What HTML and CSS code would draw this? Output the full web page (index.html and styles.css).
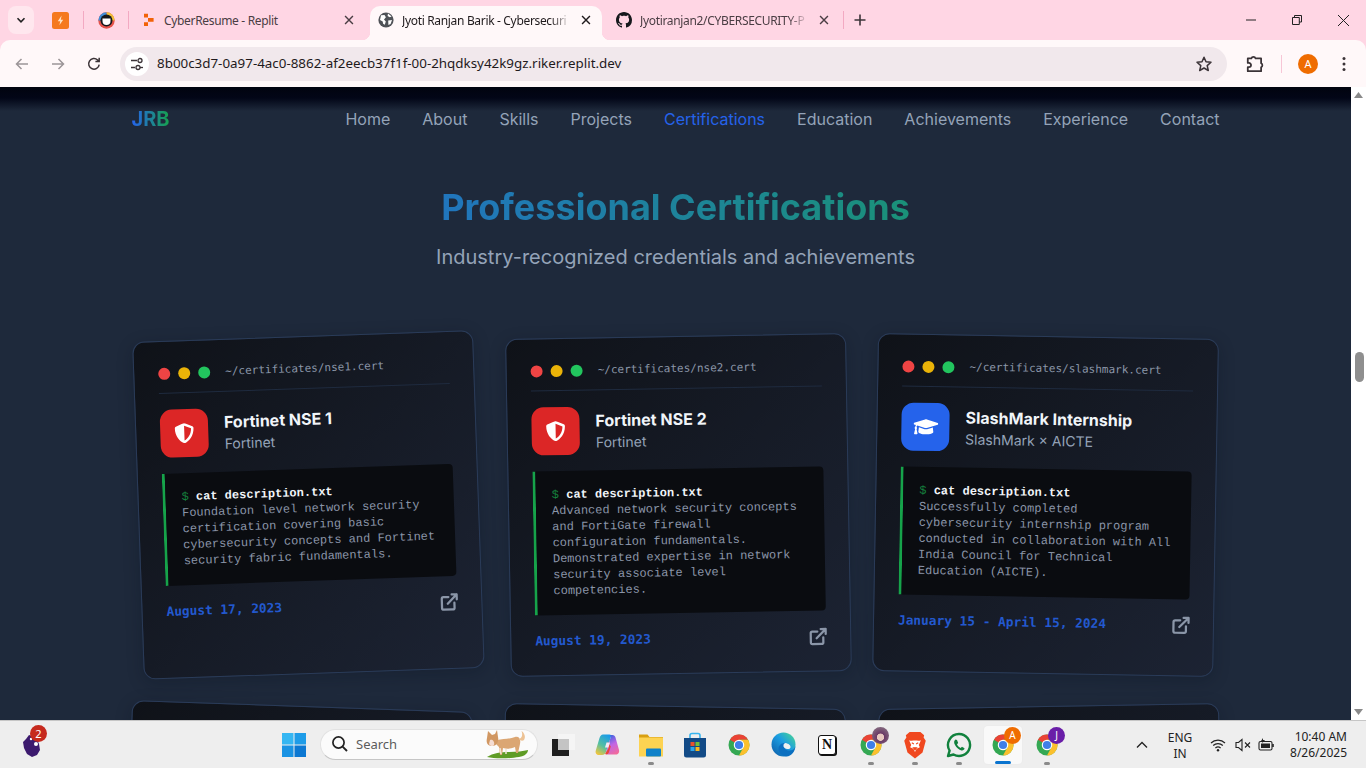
FILE: index.html
```html
<!DOCTYPE html>
<html lang="en">
<head>
<meta charset="utf-8">
<title>Jyoti Ranjan Barik - Cybersecurity</title>
<link rel="stylesheet" href="styles.css">
</head>
<body>
<svg class="defs" aria-hidden="true">
  <symbol id="chrome" viewBox="0 0 48 48">
    <circle cx="24" cy="24" r="21" fill="#34a853"/>
    <path d="M5.8 13.5A21 21 0 0 1 42.2 13.5H24L15.3 19Z" fill="#ea4335"/>
    <path d="M42.2 13.5A21 21 0 0 1 24 45L32.7 29L32.7 19L24 13.5Z" fill="#fbc02d"/>
    <circle cx="24" cy="24" r="10.5" fill="#fff"/>
    <circle cx="24" cy="24" r="8.2" fill="#3f7fe8"/>
  </symbol>
  <symbol id="ext" viewBox="0 0 24 24">
    <path d="M18 13v6a2 2 0 0 1-2 2H5a2 2 0 0 1-2-2V8a2 2 0 0 1 2-2h6M15 3h6v6M10 14 21 3" fill="none" stroke="currentColor" stroke-width="2.7" stroke-linecap="round" stroke-linejoin="round"/>
  </symbol>
  <symbol id="shield" viewBox="0 0 512 512">
    <path fill="currentColor" d="M466.5 83.7l-192-80a48.15 48.15 0 0 0-36.9 0l-192 80C27.7 91.1 16 108.6 16 128c0 198.5 114.5 335.7 221.5 380.3 11.8 4.9 25.1 4.9 36.9 0C360.1 472.6 496 349.3 496 128c0-19.4-11.7-36.9-29.5-44.3zM256.1 446.3l-.1-381 175.9 73.3c-3.3 151.4-82.1 261.1-175.8 307.7z"/>
  </symbol>
  <symbol id="cap" viewBox="0 0 640 512">
    <path fill="currentColor" d="M622.34 153.2L343.4 67.5c-15.2-4.67-31.6-4.67-46.79 0L17.66 153.2c-23.54 7.23-23.54 38.36 0 45.59l48.63 14.94c-10.67 13.19-17.23 29.28-17.88 46.9C38.78 266.15 32 276.11 32 288c0 10.78 5.68 19.85 13.86 25.65L20.33 428.53C18.11 438.52 25.71 448 35.94 448h56.11c10.24 0 17.84-9.48 15.62-19.47L82.14 313.65C90.32 307.85 96 298.78 96 288c0-11.57-6.47-21.25-15.66-26.87.76-15.02 8.44-28.3 20.69-36.72L296.6 284.5c9.06 2.78 26.44 6.25 46.79 0l278.95-85.7c23.55-7.24 23.55-38.36 0-45.6zM352.79 315.09c-28.53 8.76-52.84 3.92-65.59 0l-145.02-44.55L128 384c0 35.35 85.96 64 192 64s192-28.65 192-64l-14.18-113.47-145.03 44.56z"/>
  </symbol>
  <symbol id="close" viewBox="0 0 16 16">
    <path d="M3.5 3.5l9 9M12.5 3.5l-9 9" fill="none" stroke="currentColor" stroke-width="1.6"/>
  </symbol>
</svg>

<header class="tabstrip">
  <button class="switcher"><svg width="10" height="10" viewBox="0 0 10 10"><path d="M1.5 3.2 5 6.8 8.5 3.2" fill="none" stroke="#222" stroke-width="1.6"/></svg></button>
  <div class="pin pin-a">
    <svg width="17" height="17" viewBox="0 0 17 17"><rect width="17" height="17" rx="2.5" fill="#f5791f"/><path d="M9.6 3.6 5.8 9.3h2.4l-.8 4 3.8-5.6H8.8z" fill="#ffe3c4"/></svg>
  </div>
  <i class="sep"></i>
  <div class="pin pin-b">
    <svg width="17" height="17" viewBox="0 0 17 17"><circle cx="8.5" cy="8.5" r="8.2" fill="#e5534b"/><path d="M8.5.3a8.2 8.2 0 0 1 8.2 8.2H8.5z" fill="#f2c037"/><path d="M.3 8.5A8.2 8.2 0 0 1 8.5.3v8.2z" fill="#3f8ed8"/><circle cx="8.5" cy="8.5" r="6" fill="#16181c"/><path d="M4.5 6.5h8v2.6a4 4 0 0 1-8 0z" fill="#fff"/></svg>
  </div>
  <i class="sep"></i>
  <div class="tab">
    <svg class="fav" width="14" height="14" viewBox="0 0 14 14"><path d="M3 .8h4v3.700H3zM7 4.900h5.600v3.900H7zM3 9.200h4v3.900H3z" fill="#f26207"/></svg>
    <span class="tab-title">CyberResume - Replit</span>
    <svg class="tab-x" width="14" height="14"><use href="#close"/></svg>
  </div>
  <div class="tab tab-active">
    <svg class="fav" width="16" height="16" viewBox="0 0 16 16"><circle cx="8" cy="8" r="7.6" fill="#4f5257"/><path d="M3 3.2 6.5 3l1.4 2.2L6 7.4l1.8 2-1 3.4-1.7-1-.4-2.4L2 8zM10 1.6l3.6 3-1.800.7L9.600 4zM10.200 8.500l3.800-.5-1.400 4-2.200 1z" fill="#fff"/></svg>
    <span class="tab-title fade">Jyoti Ranjan Barik - Cybersecuri</span>
    <svg class="tab-x" width="14" height="14"><use href="#close"/></svg>
  </div>
  <div class="tab tab-third">
    <svg class="fav" width="16" height="16" viewBox="0 0 16 16"><path fill="#16181c" d="M8 0C3.58 0 0 3.58 0 8c0 3.54 2.29 6.53 5.47 7.59.4.07.55-.17.55-.38 0-.19-.01-.82-.01-1.49-2.01.37-2.53-.49-2.69-.94-.09-.23-.48-.94-.82-1.13-.28-.15-.68-.52-.01-.53.63-.01 1.08.58 1.23.82.72 1.21 1.87.87 2.33.66.07-.52.28-.87.51-1.07-1.78-.2-3.64-.89-3.64-3.95 0-.87.31-1.59.82-2.15-.08-.2-.36-1.02.08-2.12 0 0 .67-.21 2.2.82.64-.18 1.32-.27 2-.27s1.36.09 2 .27c1.53-1.04 2.2-.82 2.2-.82.44 1.1.16 1.92.08 2.12.51.56.82 1.27.82 2.15 0 3.07-1.87 3.75-3.65 3.95.29.25.54.73.54 1.48 0 1.07-.01 1.93-.01 2.2 0 .21.15.46.55.38A8.01 8.01 0 0 0 16 8c0-4.42-3.58-8-8-8z"/></svg>
    <span class="tab-title fade">Jyotiranjan2/CYBERSECURITY-P</span>
    <svg class="tab-x" width="14" height="14"><use href="#close"/></svg>
  </div>
  <i class="sep"></i>
  <svg class="plus" width="14" height="14" viewBox="0 0 14 14"><path d="M7 1.500v11M1.500 7h11" stroke="#3c3438" stroke-width="1.6"/></svg>
  <div class="winctl">
    <span class="wbtn"><svg width="12" height="12" viewBox="0 0 12 12"><path d="M1 6h10" stroke="#222" stroke-width="1"/></svg></span>
    <span class="wbtn"><svg width="12" height="12" viewBox="0 0 12 12"><path d="M1.500 3.500h6.800v7H1.500zM3.500 3.500V1.500h7v6.500H8.300" fill="none" stroke="#222" stroke-width="1"/></svg></span>
    <span class="wbtn"><svg width="13" height="13" viewBox="0 0 13 13"><path d="M1 1l11 11M12 1 1 12" stroke="#222" stroke-width="1"/></svg></span>
  </div>
</header>

<div class="toolbar">
  <svg class="tb-icon tb-back" width="16" height="16" viewBox="0 0 16 16"><path d="M14 8H2.500M7.500 3 2.500 8l5 5" fill="none" stroke="#9c9598" stroke-width="1.5"/></svg>
  <svg class="tb-icon tb-fwd" width="16" height="16" viewBox="0 0 16 16"><path d="M2 8h11.500M8.500 3l5 5-5 5" fill="none" stroke="#9c9598" stroke-width="1.5"/></svg>
  <svg class="tb-icon tb-reload" width="16" height="16" viewBox="0 0 16 16"><path d="M13.200 8.600A5.300 5.300 0 1 1 11.600 4L13 5.300M13.200 1.800v3.800H9.400" fill="none" stroke="#3b3337" stroke-width="1.5"/></svg>
  <div class="omnibox">
    <span class="tune"><svg width="14" height="14" viewBox="0 0 14 14"><path d="M1 3.500h6M1 10.500h4" stroke="#3b3337" stroke-width="1.3"/><circle cx="10" cy="3.500" r="2" fill="none" stroke="#3b3337" stroke-width="1.3"/><circle cx="8" cy="10.500" r="2" fill="none" stroke="#3b3337" stroke-width="1.3"/><path d="M10 10.500h3" stroke="#3b3337" stroke-width="1.3"/></svg></span>
    <span class="url">8b00c3d7-0a97-4ac0-8862-af2eecb37f1f-00-2hqdksy42k9gz.riker.replit.dev</span>
    <svg class="star" width="18" height="18" viewBox="0 0 18 18"><path d="M9 2.200l2 4.600 5 .5-3.800 3.300 1.100 4.900L9 13l-4.300 2.500 1.100-4.900L2 7.300l5-.5z" fill="none" stroke="#3b3337" stroke-width="1.5" stroke-linejoin="round"/></svg>
  </div>
  <svg class="tb-ext" width="20" height="20" viewBox="0 0 18 18"><path d="M2.500 4h3.200a2 2 0 0 1 3.800 0h5v4.300a2 2 0 0 1 0 3.600v3.600h-12v-3.600h1a1.800 1.800 0 0 0 0-3.900h-1z" fill="none" stroke="#3b3337" stroke-width="1.6" stroke-linejoin="round"/></svg>
  <i class="tb-sep"></i>
  <span class="avatar">A</span>
  <svg class="tb-dots" width="4" height="16" viewBox="0 0 4 16"><circle cx="2" cy="2.500" r="1.500" fill="#3b3337"/><circle cx="2" cy="8" r="1.500" fill="#3b3337"/><circle cx="2" cy="13.500" r="1.500" fill="#3b3337"/></svg>
</div>

<div class="viewport">
  <main class="page">
    <nav class="nav">
      <a class="brand">JRB</a>
      <ul class="links">
        <li>Home</li><li>About</li><li>Skills</li><li>Projects</li>
        <li class="active">Certifications</li><li>Education</li><li>Achievements</li><li>Experience</li><li>Contact</li>
      </ul>
    </nav>
    <section class="certs">
      <h2 class="title">Professional Certifications</h2>
      <p class="subtitle">Industry-recognized credentials and achievements</p>
      <div class="grid">
        <article class="card card-1">
          <div class="term"><i class="dot red"></i><i class="dot amber"></i><i class="dot green"></i><span class="path">~/certificates/nse1.cert</span></div>
          <div class="head">
            <span class="logo logo-red"><svg class="shield-i" width="20" height="20"><use href="#shield"/></svg></span>
            <div><h3>Fortinet NSE 1</h3><p>Fortinet</p></div>
          </div>
          <div class="code"><div class="cmd"><span class="prompt">$</span> cat description.txt</div>Foundation level network security certification covering basic cybersecurity concepts and Fortinet security fabric fundamentals.</div>
          <div class="foot"><span class="date">August 17, 2023</span><svg class="link" width="20" height="20"><use href="#ext"/></svg></div>
        </article>
        <article class="card card-2">
          <div class="term"><i class="dot red"></i><i class="dot amber"></i><i class="dot green"></i><span class="path">~/certificates/nse2.cert</span></div>
          <div class="head">
            <span class="logo logo-red"><svg class="shield-i" width="20" height="20"><use href="#shield"/></svg></span>
            <div><h3>Fortinet NSE 2</h3><p>Fortinet</p></div>
          </div>
          <div class="code"><div class="cmd"><span class="prompt">$</span> cat description.txt</div>Advanced network security concepts and FortiGate firewall configuration fundamentals. Demonstrated expertise in network security associate level competencies.</div>
          <div class="foot"><span class="date">August 19, 2023</span><svg class="link" width="20" height="20"><use href="#ext"/></svg></div>
        </article>
        <article class="card card-3">
          <div class="term"><i class="dot red"></i><i class="dot amber"></i><i class="dot green"></i><span class="path">~/certificates/slashmark.cert</span></div>
          <div class="head">
            <span class="logo logo-blue"><svg class="cap-i" width="25" height="20"><use href="#cap"/></svg></span>
            <div><h3>SlashMark Internship</h3><p>SlashMark × AICTE</p></div>
          </div>
          <div class="code"><div class="cmd"><span class="prompt">$</span> cat description.txt</div>Successfully completed cybersecurity internship program conducted in collaboration with All India Council for Technical Education (AICTE).</div>
          <div class="foot"><span class="date">January 15 - April 15, 2024</span><svg class="link" width="20" height="20"><use href="#ext"/></svg></div>
        </article>
        <article class="card card-4"></article>
        <article class="card card-5"></article>
        <article class="card card-6"></article>
      </div>
    </section>
  </main>
  <aside class="scrollbar">
    <svg width="15" height="16" viewBox="0 0 15 16"><path d="M3 11h9L7.500 5z" fill="#8a8a8a"/></svg>
    <span class="thumb"></span>
    <svg class="arrow-down" width="15" height="16" viewBox="0 0 15 16"><path d="M3 5h9l-4.500 6z" fill="#8a8a8a"/></svg>
  </aside>
</div>

<footer class="taskbar">
  <div class="tb-left">
    <span class="news">
      <svg width="24" height="28" viewBox="0 0 24 28"><path d="M8 4l3 1 5 3 2 5 1 6-3 5-5 2-5-3-3-6-1-6 3-3z" fill="#3c1a6e"/><circle cx="15" cy="13" r="2" fill="#fff"/><circle cx="10" cy="8" r="1.200" fill="#fff"/></svg>
      <b class="badge">2</b>
    </span>
  </div>
  <span class="start">
    <svg width="24" height="24" viewBox="0 0 24 24"><path d="M0 0h11.500v11.500H0z" fill="#35b6f2"/><path d="M12.500 0H24v11.500H12.500z" fill="#1e9ce8"/><path d="M0 12.500h11.500V24H0z" fill="#1a93e3"/><path d="M12.500 12.500H24V24H12.500z" fill="#0c78d2"/></svg>
  </span>
  <div class="search">
    <svg width="18" height="18" viewBox="0 0 18 18"><circle cx="7.500" cy="7.500" r="5.600" fill="none" stroke="#222" stroke-width="1.7"/><path d="M11.600 11.600 16 16" stroke="#222" stroke-width="1.9"/></svg>
    <span class="search-label">Search</span>
    <svg class="dog" width="46" height="30" viewBox="0 0 46 30"><path d="M3 28c6-4 14-5 22-5s14-1 19-2c0 3-3 6-9 7-9 1.500-24 2-32 0z" fill="#5f9c26"/><path d="M13 11c6-1 13-1 18-3 4-1 6 2 5 7l-2 9h-2l-1-6c-5 2-8 2-12 1l-1 7h-2l-1-8-3-3z" fill="#dba673"/><path d="M35 10c3-1 4-4 2.500-8 3 2 4.500 6 2.500 9-1 1-4 1-5-1z" fill="#edc294"/><path d="M4 2l4 4 3-1 2-4 1 7c1 4-1 9-6 9S2 13 3 9z" fill="#d19762"/><path d="M6 11c2-1 5 1 4 5-1 2-4 1-5-1z" fill="#f4dcd3"/><path d="M16 19l1 6M22 20v5" stroke="#f2e4d4" stroke-width="1.500"/></svg>
  </div>
  <div class="apps">
    <span class="app"><svg width="24" height="24" viewBox="0 0 24 24"><rect x="7" y="1" width="17" height="16" fill="#f5f5f5"/><rect x="1" y="6" width="17" height="17" fill="#1f1f1f"/><rect x="7" y="6" width="11" height="11" fill="#c4c4c4"/></svg></span>
    <span class="app"><svg width="26" height="26" viewBox="0 0 26 26"><defs><linearGradient id="cpa" x1="0.700" y1="0" x2="0.200" y2="1"><stop offset="0" stop-color="#1a9ce8"/><stop offset=".55" stop-color="#55c0a0"/><stop offset="1" stop-color="#f2c53c"/></linearGradient><linearGradient id="cpb" x1="0.300" y1="0" x2="0.700" y2="1"><stop offset="0" stop-color="#3a63e0"/><stop offset=".5" stop-color="#c266e4"/><stop offset="1" stop-color="#f36a9a"/></linearGradient></defs><path d="M9 2.500h6.500c1.500 0 2 1 1.500 2L12 20c-.7 2-2 3-4 3H5c-2.500 0-4-2-3.200-4.500L5.500 6C6.300 3.700 7.300 2.500 9 2.500z" fill="url(#cpa)"/><path d="M15.500 3h3c1.500 0 2.500 1 3 2.500L25 18c.7 2.500-1 4.500-3 4.500h-8c-2 0-2.500-1-1.800-3L16.500 6c.5-1.500 0-3-1-3z" fill="url(#cpb)"/><path d="M13.500 9.500l1 7-3.500 5.500c1.500 1 3 .5 3.800-1.500l2-6z" fill="#e8473a"/><path d="M12.500 10.500l3.500 0-1.500 5-3.500 0z" fill="#f4e8f4"/></svg></span>
    <span class="app running"><svg width="24" height="24" viewBox="0 0 24 24"><path d="M0 1.500h8.500l2 2.500H24v3H0z" fill="#d9a012"/><path d="M0 4.500h24v19H0z" fill="#fdd352"/><rect x="7" y="15.500" width="15" height="8" rx="1" fill="#0f81c9"/></svg></span>
    <span class="app"><svg width="24" height="26" viewBox="0 0 24 26"><path d="M7 6V3.500A2 2 0 0 1 9 1.500h6a2 2 0 0 1 2 2V6" fill="none" stroke="#36b4ee" stroke-width="1.6"/><path d="M1 6h22v17a2.500 2.500 0 0 1-2.500 2.500h-17A2.500 2.500 0 0 1 1 23z" fill="#124a86"/><path d="M7.500 10h4v4h-4z" fill="#e8512c"/><path d="M12.500 10h4v4h-4z" fill="#6fbe3c"/><path d="M7.500 15h4v4h-4z" fill="#2aa4ea"/><path d="M12.500 15h4v4h-4z" fill="#fbb71b"/></svg></span>
    <span class="app"><svg width="24" height="24"><use href="#chrome"/></svg></span>
    <span class="app"><svg width="25" height="25" viewBox="0 0 25 25"><defs><linearGradient id="edg" x1="0" y1="1" x2="1" y2="0"><stop offset="0" stop-color="#0c59a4"/><stop offset=".55" stop-color="#1b9de2"/><stop offset="1" stop-color="#4fdc8a"/></linearGradient></defs><circle cx="12.500" cy="12.500" r="12" fill="url(#edg)"/><path d="M24.500 14c-1 3-3 4.500-6 4.500-3.500 0-5.500-2-5.500-4.500 0-1 .5-2 1.500-3-4-.5-7 2.500-7 6 0 3.500 3 7 8 7.500 5-.3 8.500-5 9-10.500z" fill="#0b6fc0"/><path d="M14.500 11c3 .5 5.500 2.500 5 4.500-.5 1.500-2 1.800-3.500 1.500-2.500-.5-4-2-3.500-4 .2-1 1-1.800 2-2z" fill="#eef0f0"/></svg></span>
    <span class="app"><span class="notion">N</span></span>
    <span class="app running"><span class="chromebox"><svg width="24" height="24"><use href="#chrome"/></svg><i class="prof prof-pic"></i></span></span>
    <span class="app running"><svg width="24" height="28" viewBox="0 0 22 26"><path d="M6 1h10l3.500 3-.5 2 2 3-3 11-7 5.500L4 20 1 9l2-3-.5-2z" fill="#f0481f"/><path d="M5.500 8.500c2 .8 3.500.3 5.500.3s3.500.5 5.500-.3l-2 4.500 1 2-3 1.500-1.500 3-1.500-3-3-1.500 1-2z" fill="#fff"/><path d="M8 11l2 1M14 11l-2 1M9.500 15.500h3l-1.500 2z" stroke="#f0481f" stroke-width="1" fill="#f0481f"/></svg></span>
    <span class="app running"><svg width="26" height="26" viewBox="0 0 26 26"><path d="M13 2a11 11 0 0 0-9.400 16.700L2 24l5.500-1.500A11 11 0 1 0 13 2z" fill="none" stroke="#11813d" stroke-width="2.400" stroke-linejoin="round"/><path d="M9.500 7.500c-1.500 1-2 3-.5 5.500 1.500 2.800 4 5 6.500 5.500 1.500.3 3-.8 3-2.200l-2.500-1.500-1.400 1.200c-1.500-.6-3-2.200-3.600-3.700l1.200-1.300-1.200-3z" fill="#11813d"/></svg></span>
    <span class="app current"><span class="chromebox"><svg width="24" height="24"><use href="#chrome"/></svg><i class="prof prof-a">A</i></span></span>
    <span class="app running"><span class="chromebox"><svg width="24" height="24"><use href="#chrome"/></svg><i class="prof prof-j">J</i></span></span>
  </div>
  <div class="tray">
    <svg class="tray-chev" width="12" height="8" viewBox="0 0 12 8"><path d="M1 6.500 6 1.500l5 5" fill="none" stroke="#222" stroke-width="1.3"/></svg>
    <div class="lang"><span>ENG</span><span>IN</span></div>
    <svg class="tray-wifi" width="16" height="14" viewBox="0 0 16 14"><path d="M1 5a10 10 0 0 1 14 0M3.200 7.500a7 7 0 0 1 9.600 0M5.400 10a4 4 0 0 1 5.200 0" fill="none" stroke="#222" stroke-width="1.2"/><circle cx="8" cy="12.300" r="1.200" fill="#222"/></svg>
    <svg class="tray-vol" width="16" height="14" viewBox="0 0 16 14"><path d="M1 4.500h2.500L7 1.500v11l-3.500-3H1z" fill="none" stroke="#222" stroke-width="1.1"/><path d="M10 4.500l5 5M15 4.500l-5 5" stroke="#222" stroke-width="1.1"/></svg>
    <svg class="tray-bat" width="17" height="14" viewBox="0 0 17 14"><rect x="1" y="3.500" width="13" height="8.500" rx="1.500" fill="none" stroke="#222" stroke-width="1.1"/><rect x="3" y="5.500" width="9" height="4.500" fill="#222"/><path d="M15 6v3" stroke="#222" stroke-width="1.6"/><path d="M5 0 3 3h2l-1 2.500L7 2H5z" fill="#222"/></svg>
    <div class="clock"><span>10:40 AM</span><span>8/26/2025</span></div>
  </div>
</footer>
</body>
</html>
```

FILE: styles.css
```css
* { box-sizing: border-box; }
html, body { margin: 0; height: 100%; overflow: hidden; }
body {
  width: 1366px;
  height: 768px;
  display: flex;
  flex-direction: column;
  font-family: "Noto Sans", "Open Sans", sans-serif;
  background: #ffd6e4;
}
.defs { width: 0; height: 0; display: block; flex: none; }

/* tab strip */
.tabstrip {
  height: 40px;
  flex: none;
  display: flex;
  align-items: flex-end;
  padding-left: 8px;
  background: #ffd6e4;
}
.switcher {
  width: 26px;
  height: 28px;
  margin: 0 3px 6px 0;
  padding: 0;
  border: 0;
  border-radius: 8px;
  background: #ffe7ee;
  display: flex;
  align-items: center;
  justify-content: center;
}
.pin {
  height: 34px;
  padding-bottom: 6px;
  display: flex;
  align-items: center;
  justify-content: center;
}
.pin-a { width: 46px; }
.pin-b { width: 44px; }
.sep {
  width: 1px;
  height: 18px;
  margin-bottom: 11px;
  background: #f3a9c2;
  flex: none;
}
.tab {
  width: 241px;
  height: 34px;
  flex: none;
  display: flex;
  align-items: center;
  padding: 0 14px 6px 12px;
  font-size: 12px;
  color: #4a3d43;
  position: relative;
}
.tab .fav { flex: none; margin-right: 9px; }
.tab .tab-title {
  flex: 1;
  min-width: 0;
  white-space: nowrap;
  overflow: hidden;
  letter-spacing: -0.33px;
}
.tab .fade {
  -webkit-mask-image: linear-gradient(90deg, #000 88%, transparent);
  mask-image: linear-gradient(90deg, #000 88%, transparent);
}
.tab-x { flex: none; color: #4a3d43; margin-left: 8px; }
.tab-active {
  width: 232px;
  padding: 0 9px 6px 8px;
  background: #fff8f9;
  border-radius: 10px 10px 0 0;
  color: #1f1a1c;
}
.tab-active .fav { margin-right: 8px; }
.tab-active .tab-x { color: #1f1a1c; }
.tab-active::before,
.tab-active::after {
  content: "";
  position: absolute;
  bottom: 0;
  width: 8px;
  height: 8px;
}
.tab-active::before { left: -8px; background: radial-gradient(circle at 0 0, transparent 8px, #fff8f9 8.5px); }
.tab-active::after { right: -8px; background: radial-gradient(circle at 100% 0, transparent 8px, #fff8f9 8.5px); }
.tab-third { padding: 0 12px 6px 14px; }
.tab-third .fav { margin-right: 8px; }
.plus { margin: 0 0 13px 9px; flex: none; }
.winctl { margin-left: auto; display: flex; align-self: stretch; }
.wbtn { width: 46px; display: flex; align-items: center; justify-content: center; }

/* toolbar */
.toolbar {
  height: 47px;
  flex: none;
  display: flex;
  align-items: center;
  background: #fff8f9;
  border-radius: 10px 10px 0 0;
  padding-left: 14px;
  position: relative;
}
.tb-icon { flex: none; }
.tb-fwd { margin-left: 20px; }
.tb-reload { margin-left: 20px; }
.omnibox {
  width: 1107px;
  height: 34px;
  margin-left: 18px;
  flex: none;
  display: flex;
  align-items: center;
  border-radius: 17px;
  background: #f1e8ec;
  padding: 0 14px 0 5px;
}
.tune {
  width: 24px;
  height: 24px;
  border-radius: 50%;
  background: #fff;
  display: flex;
  align-items: center;
  justify-content: center;
  flex: none;
}
.url {
  margin-left: 8px;
  font-size: 13.38px;
  line-height: 18px;
  padding-bottom: 1px;
  color: #1f1a1c;
  white-space: nowrap;
}
.star { margin-left: auto; flex: none; }
.tb-ext { margin-left: 18px; flex: none; }
.tb-sep { width: 1px; height: 18px; margin-left: 16px; background: #f7c6d6; flex: none; }
.avatar {
  width: 20px;
  height: 20px;
  margin-left: 16px;
  border-radius: 50%;
  background: #ef6c00;
  color: #fff;
  font-size: 11px;
  display: flex;
  align-items: center;
  justify-content: center;
  flex: none;
}
.tb-dots { margin-left: 24px; flex: none; }

/* page */
.viewport {
  height: 633px;
  flex: none;
  display: flex;
  overflow: hidden;
}
.page {
  width: 1351px;
  flex: none;
  overflow: hidden;
  background: #1e293b;
  font-family: Inter, "Noto Sans", sans-serif;
}
.nav {
  height: 64px;
  padding: 0 131.5px;
  display: flex;
  align-items: center;
  justify-content: space-between;
  background: linear-gradient(#01040f 0, #020617 11px, #1e293b 24px);
}
.brand {
  font-size: 20px;
  font-weight: 700;
  line-height: 28px;
  background: linear-gradient(90deg, #2563eb, #16a34a);
  -webkit-background-clip: text;
  background-clip: text;
  color: transparent;
}
.links { display: flex; gap: 32px; margin: 0; padding: 0; list-style: none; font-size: 16px; font-weight: 400; color: #94a3b8; }
.links .active { color: #2563eb; }
.certs { padding: 36px 131.5px 0; }
.title {
  margin: 0;
  font-size: 36px;
  line-height: 40px;
  font-weight: 700;
  text-align: center;
  background: linear-gradient(90deg, #2563eb, #16a34a);
  -webkit-background-clip: text;
  background-clip: text;
  color: transparent;
}
.subtitle {
  margin: 16px 0 65px;
  font-size: 20px;
  line-height: 28px;
  text-align: center;
  color: #94a3b8;
}
.grid {
  display: grid;
  grid-template-columns: repeat(3, 1fr);
  gap: 32px;
}
.card {
  min-height: 338px;
  padding: 24px;
  border: 1px solid #2a3b58;
  border-radius: 12px;
  background: linear-gradient(135deg, #0f1218, #1c2333);
  box-shadow: 0 4px 16px rgba(8, 14, 26, 0.25);
  transform-origin: 50% 0;
}
.card-1 { transform: rotate(-2deg); }
.card-2 { transform: rotate(-1deg); }
.card-3 { transform: rotate(1deg); }
.card-4 { transform: rotate(2deg); }
.card-5 { transform: rotate(1deg); }
.card-6 { transform: rotate(-1deg); }

.term {
  display: flex;
  align-items: center;
  height: 28px;
  padding-bottom: 12px;
  border-bottom: 1px solid #1f2b3f;
  margin-bottom: 16px;
}
.dot { width: 12px; height: 12px; border-radius: 50%; margin-right: 8px; flex: none; }
.red { background: #ef4444; }
.amber { background: #eab308; }
.green { background: #22c55e; }
.path {
  margin-left: 7px;
  font-family: "DejaVu Sans Mono", monospace;
  font-size: 11px;
  line-height: 16px;
  color: #8b96a8;
  white-space: nowrap;
}
.head { display: flex; align-items: center; gap: 16px; margin-bottom: 16px; }
.logo {
  width: 48px;
  height: 48px;
  border-radius: 12px;
  display: flex;
  align-items: center;
  justify-content: center;
  color: #fff;
  flex: none;
}
.logo-red { background: #dc2626; }
.logo-blue { background: #2563eb; }
h3 { margin: 0; font-size: 16px; line-height: 24px; font-weight: 700; color: #f1f5f9; white-space: nowrap; }
.head p { margin: 0; font-size: 14px; line-height: 20px; color: #94a3b8; }
.code {
  padding: 16px;
  border-left: 3px solid #16a34a;
  border-radius: 0 4px 4px 0;
  background: #0a0c10;
  font-family: "Liberation Mono", monospace;
  font-size: 12px;
  line-height: 16px;
  color: #8a95a8;
  margin-bottom: 16px;
}
.cmd { color: #f1f5f9; font-weight: 700; }
.prompt { color: #15803d; font-weight: 400; }
.foot { display: flex; align-items: flex-start; justify-content: space-between; }
.date {
  font-family: "DejaVu Sans Mono", monospace;
  font-size: 12.8px;
  line-height: 20px;
  font-weight: 700;
  color: #2359cf;
  white-space: nowrap;
}
.link { color: #8b96a8; flex: none; margin-right: -2px; }

/* scrollbar */
.scrollbar {
  width: 15px;
  flex: none;
  background: #fff;
  display: flex;
  flex-direction: column;
  align-items: center;
}
.thumb {
  width: 9px;
  height: 30px;
  margin-top: 249px;
  border-radius: 5px;
  background: #8f8f8f;
  margin-left: 1px;
}
.arrow-down { margin-top: auto; }

/* taskbar */
.taskbar {
  height: 48px;
  flex: none;
  display: flex;
  align-items: center;
  background: #eeeeee;
  border-top: 1px solid #c6c6c6;
  font-family: "Noto Sans", sans-serif;
  color: #222;
}
.tb-left { width: 272px; flex: none; padding-left: 21px; display: flex; }
.news { position: relative; display: flex; }
.badge {
  position: absolute;
  top: -6px;
  left: 9px;
  width: 17px;
  height: 17px;
  border-radius: 50%;
  background: #c62a1e;
  color: #fff;
  font-size: 11px;
  font-weight: 400;
  text-align: center;
  line-height: 17px;
}
.start { width: 44px; flex: none; display: flex; justify-content: center; }
.search {
  width: 218px;
  height: 31px;
  margin-left: 4px;
  margin-right: 3px;
  flex: none;
  display: flex;
  align-items: center;
  padding: 0 5px 2px 10px;
  border-radius: 16px;
  background: #fbfbfb;
  border: 1px solid #e2e2e2;
  border-bottom-color: #c6c6c6;
  font-size: 13px;
  color: #5c5c5c;
}
.search-label { margin-left: 7px; }
.dog { margin-left: auto; margin-right: 2px; }
.apps { display: flex; flex: none; }
.app {
  width: 44px;
  height: 38px;
  display: flex;
  align-items: center;
  justify-content: center;
  position: relative;
  flex: none;
}
.app.running::after,
.app.current::after {
  content: "";
  position: absolute;
  bottom: -1px;
  left: 19px;
  width: 6px;
  height: 3px;
  border-radius: 2px;
  background: #8a8a8a;
}
.app.current {
  width: 38px;
  margin: 0 3px;
  border-radius: 4px;
  background: #f9f9f9;
  box-shadow: 0 0 0 1px #ececec;
}
.app.current::after { left: 11px; width: 16px; background: #0a74cf; bottom: 0; }
.notion {
  width: 18px;
  height: 20px;
  border: 1.5px solid #111;
  border-radius: 3px;
  background: #fff;
  font-family: "Liberation Serif", serif;
  font-weight: 700;
  font-size: 14px;
  line-height: 17px;
  text-align: center;
  color: #111;
  box-shadow: 1px 1px 0 #111;
}
.chromebox { position: relative; display: flex; }
.prof {
  position: absolute;
  top: -6px;
  right: -6px;
  width: 17px;
  height: 17px;
  border-radius: 50%;
  font-size: 10px;
  font-style: normal;
  color: #fff;
  text-align: center;
  line-height: 17px;
}
.prof-pic { background: radial-gradient(circle at 50% 60%, #e8c9c0 0 25%, #6b3a66 30%, #8f7f8a 100%); }
.prof-a { background: #ef6c00; }
.prof-j { background: #6a1ea8; }
.tray { margin-left: auto; display: flex; align-items: center; padding-right: 19px; flex: none; }
.tray-chev { flex: none; }
.lang {
  width: 36px;
  margin-left: 14px;
  padding-top: 2px;
  display: flex;
  flex-direction: column;
  align-items: center;
  font-size: 12px;
  line-height: 16px;
}
.tray-wifi { margin-left: 12px; flex: none; }
.tray-vol { margin-left: 9px; flex: none; }
.tray-bat { margin-left: 7px; flex: none; }
.clock {
  width: 64px;
  margin-left: 8px;
  display: flex;
  flex-direction: column;
  align-items: flex-end;
  font-size: 12px;
  line-height: 16px;
  white-space: nowrap;
}
```
